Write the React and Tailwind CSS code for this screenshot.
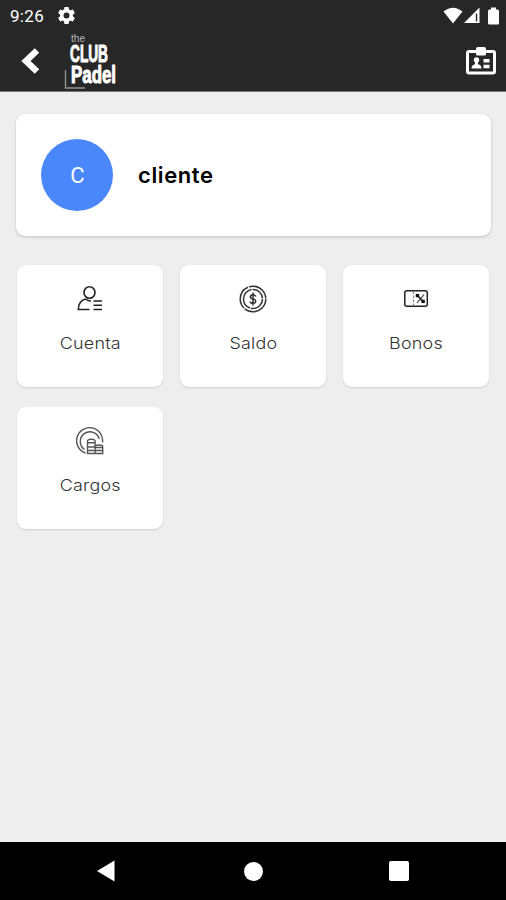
import React from "react";

function StatusBar() {
  return (
    <div className="flex h-[32px] items-center pl-[10px] pr-[7px]">
      <span className="w-[48px] text-[17px] leading-[32px] tracking-[0.3px]">9:26</span>
      <svg className="mb-[1px]" width="17" height="17" viewBox="2 2 20 20" fill="currentColor">
        <path d="M19.43 12.98c.04-.32.07-.64.07-.98s-.03-.66-.07-.98l2.11-1.65a.5.5 0 0 0 .12-.64l-2-3.46a.5.5 0 0 0-.61-.22l-2.49 1a7.3 7.3 0 0 0-1.69-.98l-.38-2.65A.49.49 0 0 0 14 2h-4a.49.49 0 0 0-.49.42l-.38 2.65c-.61.25-1.17.59-1.69.98l-2.49-1a.5.5 0 0 0-.61.22l-2 3.46a.5.5 0 0 0 .12.64l2.11 1.65c-.04.32-.07.65-.07.98s.03.66.07.98l-2.11 1.65a.5.5 0 0 0-.12.64l2 3.46c.12.22.39.3.61.22l2.49-1c.52.4 1.08.73 1.69.98l.38 2.65c.03.24.24.42.49.42h4c.25 0 .46-.18.49-.42l.38-2.65c.61-.25 1.17-.59 1.69-.98l2.49 1c.23.09.49 0 .61-.22l2-3.46a.5.5 0 0 0-.12-.64zM12 15.5a3.5 3.5 0 1 1 0-7 3.5 3.5 0 0 1 0 7z" />
      </svg>
      <div className="ml-auto flex items-center pb-[1px]">
        <svg width="20" height="17" viewBox="0 0 20 17" fill="currentColor">
          <path d="M0.5 4.5Q10-3.2 19.5 4.5L10 16.5Z" />
        </svg>
        <svg className="ml-[1px]" width="16" height="17" viewBox="0 0 16 17">
          <path d="M0 16L15.5 0.5V16Z" fill="currentColor" />
          <path d="M11.8 6.5h1.4v8h-1.4z" fill="#272727" />
        </svg>
        <svg className="ml-[8px]" width="11" height="18" viewBox="0 0 11 18" fill="currentColor">
          <path d="M3 0.5h5v2h1.5q1.5 0 1.5 1.5v12q0 1.5-1.5 1.5h-8Q0 17.500 0 16V4q0-1.500 1.500-1.500H3Z" />
        </svg>
      </div>
    </div>
  );
}

function Logo() {
  return (
    <svg className="ml-[23px] overflow-visible" width="54" height="58" viewBox="0 0 54 58" fontFamily="'Liberation Sans', sans-serif" fontWeight="700">
      <text x="7" y="9" fontSize="10" fontWeight="400" fill="#b5b5b5" textLength="14" lengthAdjust="spacingAndGlyphs">the</text>
      <g fill="#fff" stroke="#fff" strokeWidth="1">
        <text x="6" y="28.500" fontSize="24.500" textLength="38" lengthAdjust="spacingAndGlyphs">CLUB</text>
        <text x="7" y="49.500" fontSize="23" textLength="45" lengthAdjust="spacingAndGlyphs">Padel</text>
      </g>
      <path d="M1.500 37V55H21" fill="none" stroke="#929292" strokeWidth="1.400" />
    </svg>
  );
}

function AppBar() {
  return (
    <div className="flex h-[59px] items-center pl-[21px] pr-[10px]">
      <svg className="mb-[2px]" width="20" height="26" viewBox="0 0 20 26" fill="none" stroke="currentColor" strokeWidth="6.400">
        <path d="M16 2.500L5 13L16 23.500" />
      </svg>
      <Logo />
      <svg className="ml-auto mb-[1px]" width="30" height="28" viewBox="0 0 30 28">
        <rect x="1.500" y="4.500" width="27" height="21.500" rx="1.500" fill="none" stroke="currentColor" strokeWidth="3" />
        <path d="M10 2q0-2 2-2h6q2 0 2 2v5q0 1.500-1.500 1.500h-7q-1.500 0-1.500-1.500Z" fill="currentColor" />
        <circle cx="10.500" cy="13" r="2.700" fill="currentColor" />
        <path d="M5.500 21.500q0-3.500 3.500-4.200v-3h3v3q3.500.7 3.500 4.200ZM17.500 12h6v3.500h-6zM17.500 17.800h6v3.500h-6z" fill="currentColor" />
      </svg>
    </div>
  );
}

function AccountIcon() {
  return (
    <svg width="28" height="28" viewBox="0 0 28 28" fill="none" stroke="#222" strokeWidth="1.600">
      <ellipse cx="13.500" cy="7.500" rx="5.500" ry="5.800" />
      <path d="M9.500 14C4.500 15.500 2.300 18.500 2.300 24.500H13.500M9.500 14Q12 16 15 16M17.500 16H26M17.500 20.300H26M17.500 24.500H26" />
    </svg>
  );
}

function BalanceIcon() {
  return (
    <svg width="28" height="28" viewBox="0 0 28 28" fill="none" stroke="#333" strokeWidth="1.500">
      <circle cx="14" cy="14" r="12.800" strokeDasharray="29 1 24.800 1 23.600 1" />
      <circle cx="14" cy="14" r="9.500" strokeDasharray="17 1 25 1 14.600 1" />
      <path d="M16.800 11.500Q16.300 9.800 14 9.800T11.300 12Q11.300 13.500 14 14T16.800 16.300Q16.800 18.300 14 18.300T11.200 16.500M14 7.500V20.500" />
    </svg>
  );
}

function VoucherIcon() {
  return (
    <svg width="26" height="28" viewBox="0 0 26 28" fill="none" stroke="#222" strokeWidth="1.500">
      <rect x="1.800" y="5.800" width="22.500" height="15.400" rx="2" />
      <path d="M10.500 6.500V21" stroke="#888" strokeWidth="1.300" strokeDasharray="2.500 1.500" />
      <path d="M21 9.500L14 18" strokeWidth="1.300" stroke="#666" />
      <path d="M14 10L21 17.500" strokeWidth="1.700" />
      <path d="M12.800 9h3.300v3.300h-3.300zM18.500 14.800h3.300v3.300h-3.300z" fill="#111" stroke="none" />
    </svg>
  );
}

function ChargesIcon() {
  return (
    <svg width="28" height="28" viewBox="0 0 28 28" fill="none" stroke="#555" strokeWidth="1.400">
      <path d="M9.500 26A13 13 0 1 1 26.500 15.500" />
      <path d="M8.500 22.500A9.700 9.700 0 1 1 23.300 11.800" />
      <path d="M11.500 14q0-1.800 3.800-1.800t3.800 1.800V26.500H11.500ZM19.100 19.500q0-1.500 3.800-1.500t3.800 1.500v7H19.100ZM11.500 15.800h7.600M11.500 20h7.600M11.500 23.500h15M19.100 20.500h7.600" />
    </svg>
  );
}

const tiles = [
  { label: "Cuenta", icon: AccountIcon },
  { label: "Saldo", icon: BalanceIcon },
  { label: "Bonos", icon: VoucherIcon },
  { label: "Cargos", icon: ChargesIcon },
];

function Tile({ label, icon: Icon }) {
  return (
    <button className="flex h-[122px] flex-col items-center rounded-[9px] bg-white pt-[20px] shadow-[0_1px_2px_rgba(0,0,0,0.13)]">
      <Icon />
      <span className="mt-[18px] scale-x-[1.12] text-[16px] font-light leading-[24px] tracking-[0.2px] text-[#333]">{label}</span>
    </button>
  );
}

export default function App() {
  return (
    <div className="flex h-[900px] w-[506px] flex-col overflow-hidden bg-[#eeeeee] font-['Inter',sans-serif]">
      <header className="h-[92px] shrink-0 border-b border-[#777] bg-[#272727] font-['Roboto',sans-serif] text-white">
        <StatusBar />
        <AppBar />
      </header>
      <main className="flex-1 pt-[22px]">
        <section className="ml-[16px] mr-[15px] flex h-[122px] items-center rounded-[9px] bg-white pl-[25px] shadow-[0_1px_3px_rgba(0,0,0,0.2)]">
          <div className="flex size-[72px] items-center justify-center rounded-full bg-[#4a87fb] pl-[1px] pt-[1px] font-['Roboto',sans-serif] text-[22px] text-white">C</div>
          <h1 className="ml-[25px] text-[22px] font-semibold tracking-[0.6px] text-black">cliente</h1>
        </section>
        <section className="ml-[17px] mt-[29px] grid w-[472px] grid-cols-3 gap-x-[17px] gap-y-[20px]">
          {tiles.map((tile) => (
            <Tile key={tile.label} {...tile} />
          ))}
        </section>
      </main>
      <nav className="flex h-[58px] shrink-0 items-center justify-between bg-black pl-[96px] pr-[97px] text-white">
        <svg width="19" height="22" viewBox="0 0 19 22" fill="currentColor">
          <path d="M18.500 0.500V21.500L1 11Z" />
        </svg>
        <div className="ml-[3px] size-[19px] rounded-full bg-white" />
        <div className="h-[20px] w-[20px] rounded-[2px] bg-white" />
      </nav>
    </div>
  );
}
